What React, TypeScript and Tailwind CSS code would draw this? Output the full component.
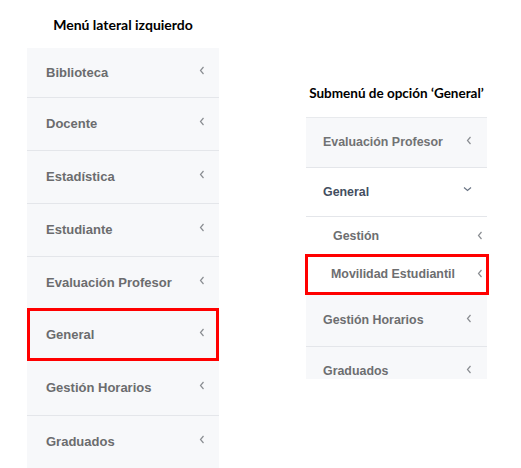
import React from "react";

const Chevron = ({ dir = "left", className = "" }: { dir?: "left" | "down"; className?: string }) =>
  dir === "left" ? (
    <svg width="6" height="9" viewBox="0 0 6 9" className={className}>
      <path d="M4.5 1 L1.5 4.5 L4.5 8" fill="none" stroke="#8a8d92" strokeWidth="1.2" />
    </svg>
  ) : (
    <svg width="9" height="6" viewBox="0 0 9 6" className={className}>
      <path d="M1 1.5 L4.5 4.5 L8 1.5" fill="none" stroke="#6b7585" strokeWidth="1.2" />
    </svg>
  );

const leftItems = [
  "Biblioteca",
  "Docente",
  "Estadística",
  "Estudiante",
  "Evaluación Profesor",
  "General",
  "Gestión Horarios",
  "Graduados",
];

export default function App() {
  return (
    <div
      className="w-[521px] h-[468px] bg-white flex overflow-hidden"
      style={{ fontFamily: '"Liberation Sans", Arial, sans-serif' }}
    >
      {/* Left column */}
      <div className="ml-[27px] w-[192px] flex flex-col">
        <div
          className="h-[49px] flex items-center justify-center text-[14px] font-bold text-black"
          style={{ fontFamily: 'Lato, "Open Sans", sans-serif' }}
        >
          Menú lateral izquierdo
        </div>
        <div className="bg-[#f7f8fa] flex flex-col">
          {leftItems.map((item, i) => {
            const isGeneral = item === "General";
            return (
              <div
                key={item}
                className={
                  isGeneral
                    ? "h-[53px] -mt-[1px] border-[3px] border-[#ff0000] flex items-center justify-between pl-[16px] pr-[11px]"
                    : i === 0
                    ? "h-[49px] flex items-center justify-between pl-[19px] pr-[14px]"
                    : leftItems[i - 1] === "General"
                    ? "h-[54px] flex items-center justify-between pl-[19px] pr-[14px]"
                    : "h-[53px] border-t border-[#e4e6ea] flex items-center justify-between pl-[19px] pr-[14px]"
                }
              >
                <span className="text-[13px] font-bold text-[#6b6c6e]">{item}</span>
                <Chevron className="-mt-[5px]" />
              </div>
            );
          })}
        </div>
      </div>

      {/* Right column */}
      <div className="ml-[87px] w-[181px] flex flex-col">
        <div
          className="mt-[70px] h-[47px] flex items-center justify-center text-[13.5px] font-bold text-black whitespace-nowrap"
          style={{ fontFamily: 'Lato, "Open Sans", sans-serif' }}
        >
          Submenú de opción ‘General’
        </div>
        <div className="h-[261px] flex flex-col border-t border-[#e8eaed]">
          <div className="h-[50px] shrink-0 bg-[#f7f8fa] border-b border-[#e4e6ea] flex items-center justify-between pl-[17px] pr-[15px]">
            <span className="text-[12.4px] font-bold text-[#717274]">Evaluación Profesor</span>
            <Chevron className="-mt-[4px]" />
          </div>
          <div className="h-[49px] shrink-0 bg-white border-b border-[#e4e6ea] flex items-center justify-between pl-[17px] pr-[15px]">
            <span className="text-[12.4px] font-bold text-[#434e5f]">General</span>
            <Chevron dir="down" className="-mt-[6px]" />
          </div>
          <div className="h-[37px] shrink-0 bg-white flex items-center justify-between pl-[27px] pr-[4px] pt-[2px]">
            <span className="text-[12.4px] font-bold text-[#6d6e70]">Gestión</span>
            <Chevron className="-mt-[3px]" />
          </div>
          <div className="h-[41px] shrink-0 -ml-[1px] -mr-[2px] bg-white border-[3px] border-[#ff0000] flex items-center justify-between pl-[23px] pr-[3px]">
            <span className="text-[12.4px] font-bold text-[#6d6e70]">Movilidad Estudiantil</span>
            <Chevron className="-mt-[3px]" />
          </div>
          <div className="h-[52px] shrink-0 bg-[#f7f8fa] border-b border-[#e4e6ea] flex items-center justify-between pl-[17px] pr-[15px]">
            <span className="text-[12.4px] font-bold text-[#6d6e70]">Gestión Horarios</span>
            <Chevron className="-mt-[4px]" />
          </div>
          <div className="h-[32px] shrink-0 bg-[#f7f8fa] overflow-hidden">
            <div className="h-[49px] flex items-center justify-between pl-[17px] pr-[15px]">
              <span className="text-[12.4px] font-bold text-[#6d6e70]">Graduados</span>
              <Chevron className="-mt-[4px]" />
            </div>
          </div>
        </div>
      </div>
    </div>
  );
}
